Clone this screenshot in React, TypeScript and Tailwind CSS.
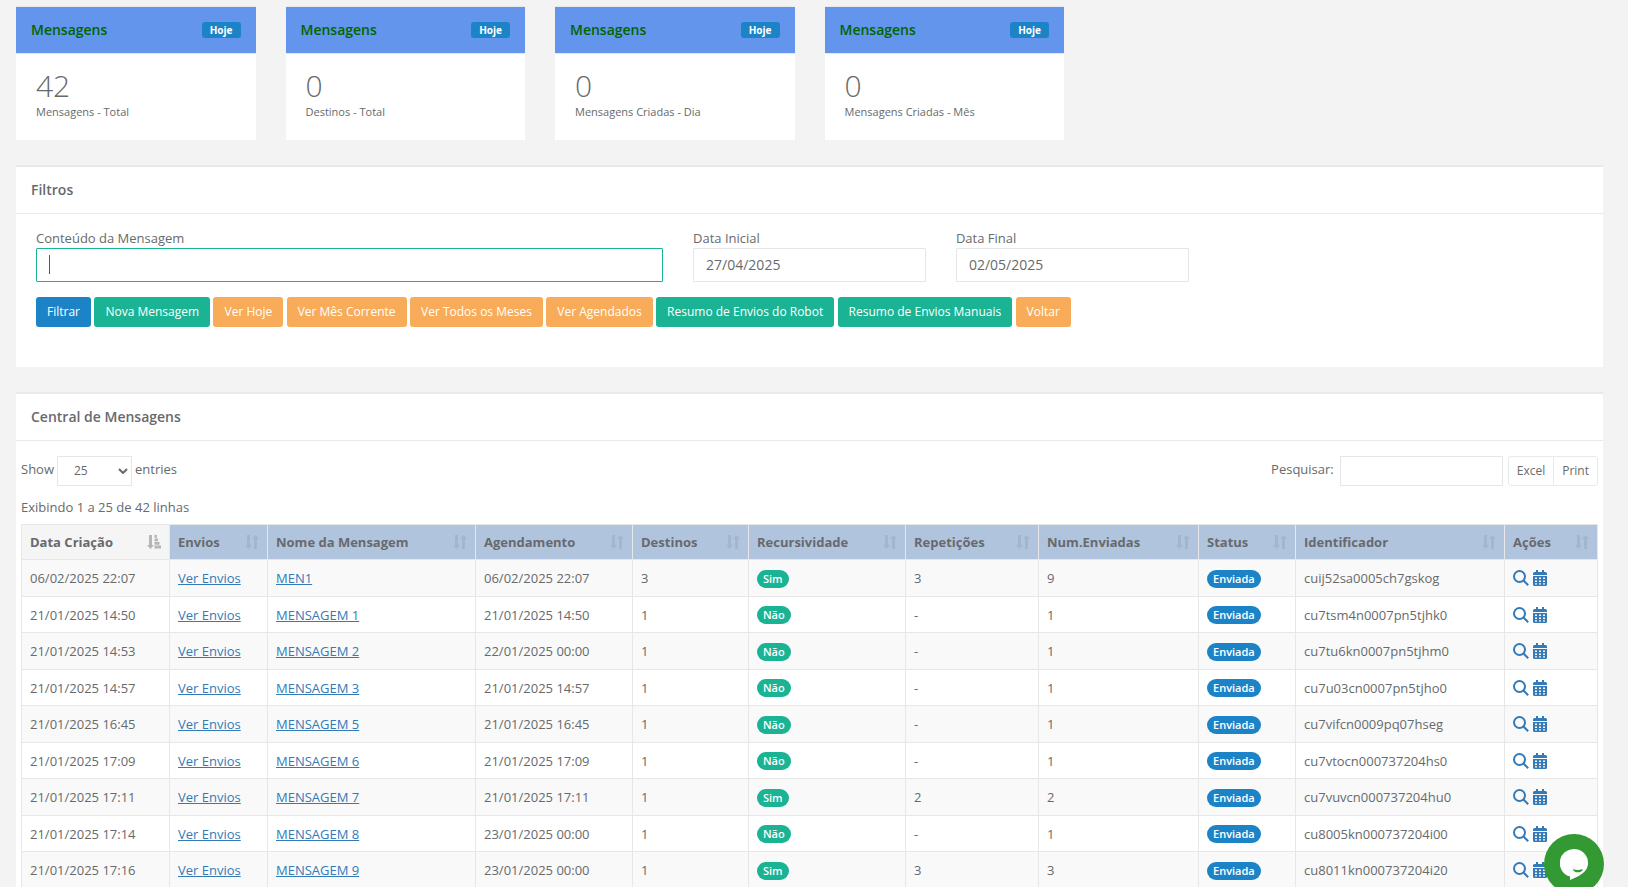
import { Fragment } from "react";
import type { ReactNode } from "react";
import { clsx } from "clsx";

type Message = {
  created: string;
  name: string;
  schedule: string;
  targets: number;
  recurring: boolean;
  repeats: string;
  sent: number;
  id: string;
};

const CARDS = [
  { value: 42, label: "Mensagens - Total" },
  { value: 0, label: "Destinos - Total" },
  { value: 0, label: "Mensagens Criadas - Dia" },
  { value: 0, label: "Mensagens Criadas - Mês" },
];

const TONES = {
  primary: "bg-[#1c84c6]",
  success: "bg-[#1ab394]",
  warning: "bg-[#f8ac59]",
};

const ACTIONS: { label: string; tone: keyof typeof TONES }[] = [
  { label: "Filtrar", tone: "primary" },
  { label: "Nova Mensagem", tone: "success" },
  { label: "Ver Hoje", tone: "warning" },
  { label: "Ver Mês Corrente", tone: "warning" },
  { label: "Ver Todos os Meses", tone: "warning" },
  { label: "Ver Agendados", tone: "warning" },
  { label: "Resumo de Envios do Robot", tone: "success" },
  { label: "Resumo de Envios Manuais", tone: "success" },
  { label: "Voltar", tone: "warning" },
];

// Column widths are proportions: the fixed table stretches them to the panel.
const COLUMNS = [
  { label: "Data Criação", width: "w-[148px]" },
  { label: "Envios", width: "w-[98px]" },
  { label: "Nome da Mensagem", width: "w-[208px]" },
  { label: "Agendamento", width: "w-[157px]" },
  { label: "Destinos", width: "w-[116px]" },
  { label: "Recursividade", width: "w-[157px]" },
  { label: "Repetições", width: "w-[133px]" },
  { label: "Num.Enviadas", width: "w-[160px]" },
  { label: "Status", width: "w-[97px]" },
  { label: "Identificador", width: "w-[209px]" },
  { label: "Ações", width: "w-[93px]" },
];

const MESSAGES: Message[] = [
  { created: "06/02/2025 22:07", name: "MEN1", schedule: "06/02/2025 22:07", targets: 3, recurring: true, repeats: "3", sent: 9, id: "cuij52sa0005ch7gskog" },
  { created: "21/01/2025 14:50", name: "MENSAGEM 1", schedule: "21/01/2025 14:50", targets: 1, recurring: false, repeats: "-", sent: 1, id: "cu7tsm4n0007pn5tjhk0" },
  { created: "21/01/2025 14:53", name: "MENSAGEM 2", schedule: "22/01/2025 00:00", targets: 1, recurring: false, repeats: "-", sent: 1, id: "cu7tu6kn0007pn5tjhm0" },
  { created: "21/01/2025 14:57", name: "MENSAGEM 3", schedule: "21/01/2025 14:57", targets: 1, recurring: false, repeats: "-", sent: 1, id: "cu7u03cn0007pn5tjho0" },
  { created: "21/01/2025 16:45", name: "MENSAGEM 5", schedule: "21/01/2025 16:45", targets: 1, recurring: false, repeats: "-", sent: 1, id: "cu7vifcn0009pq07hseg" },
  { created: "21/01/2025 17:09", name: "MENSAGEM 6", schedule: "21/01/2025 17:09", targets: 1, recurring: false, repeats: "-", sent: 1, id: "cu7vtocn000737204hs0" },
  { created: "21/01/2025 17:11", name: "MENSAGEM 7", schedule: "21/01/2025 17:11", targets: 1, recurring: true, repeats: "2", sent: 2, id: "cu7vuvcn000737204hu0" },
  { created: "21/01/2025 17:14", name: "MENSAGEM 8", schedule: "23/01/2025 00:00", targets: 1, recurring: false, repeats: "-", sent: 1, id: "cu8005kn000737204i00" },
  { created: "21/01/2025 17:16", name: "MENSAGEM 9", schedule: "23/01/2025 00:00", targets: 1, recurring: true, repeats: "3", sent: 3, id: "cu8011kn000737204i20" },
];

const fieldClass = "w-full h-[34px] border bg-white px-3 pb-[2px] text-[14px] rounded-[1px] outline-none";
const cellClass = "border border-[#e7e7e7] px-2";

function SortIcon({ active }: { active?: boolean }) {
  return (
    <svg
      viewBox="0 0 14 14"
      aria-hidden="true"
      className={clsx("size-[14px] shrink-0 fill-current", active ? "opacity-45" : "opacity-15")}
    >
      <path d="M2 0h3v10h2L3.500 14 0 10h2z" />
      {active ? (
        <path d="M7.500 0h2.500v2.800H7.500zM7.500 3.500h3.500v2.800H7.500zM7.500 7h5v2.800h-5zM7.500 10.500H14v3H7.500z" />
      ) : (
        <path d="M9 14h3V4h2l-3.500-4L7 4h2z" />
      )}
    </svg>
  );
}

function SearchIcon() {
  return (
    <svg viewBox="0 0 16 16" aria-hidden="true" className="size-4 fill-none stroke-current stroke-2">
      <circle cx="6.500" cy="6.500" r="5.500" />
      <path d="M10.500 10.500 15.200 15.200" />
    </svg>
  );
}

function CalendarIcon() {
  return (
    <svg viewBox="0 0 14 16" aria-hidden="true" className="h-4 w-[14px] fill-current">
      <path
        fillRule="evenodd"
        d="M3 0h2v2h4V0h2v2h1.500A1.500 1.500 0 0 1 14 3.500V5H0V3.500A1.500 1.500 0 0 1 1.500 2H3zM0 6h14v8.500a1.500 1.500 0 0 1-1.500 1.500h-11A1.500 1.500 0 0 1 0 14.500zM2 7.500V9h2V7.500zM6 7.500V9h2V7.500zM10 7.500V9h2V7.500zM2 10.500V12h2v-1.500zM6 10.500V12h2v-1.500zM10 10.500V12h2v-1.500zM2 13.300v1.200h2v-1.200zM6 13.300v1.200h2v-1.200zM10 13.300v1.200h2v-1.200z"
      />
    </svg>
  );
}

function Pill({ tone, children }: { tone: keyof typeof TONES; children: ReactNode }) {
  return (
    <span className={clsx("inline-block rounded-full px-[6px] text-[11px] leading-[18px] font-semibold text-white align-middle", TONES[tone])}>
      {children}
    </span>
  );
}

function Panel({ title, children }: { title: string; children: ReactNode }) {
  return (
    <section className="mb-[25px] border-t-2 border-[#e7eaec] bg-white">
      <h5 className="h-[47px] border-b border-[#e7eaec] px-[15px] text-[14px] leading-[45px] font-semibold">{title}</h5>
      {children}
    </section>
  );
}

export default function App() {
  return (
    <main className="min-h-screen bg-[#f3f3f4] pt-[6px] pr-[25px] pl-4 font-['Open_Sans',sans-serif] text-[13px] leading-[18px] text-[#676a6c]">
      <div className="mb-[25px] grid grid-cols-6 gap-[30px]">
        {CARDS.map((card) => (
          <section key={card.label} className="border-t border-[#e7eaec] bg-white">
            <div className="flex h-[47px] items-center justify-between border-b border-[#e7eaec] bg-[#6495ed] px-[15px]">
              <h5 className="text-[14px] font-semibold text-[#006400]">Mensagens</h5>
              <span className="rounded-[3px] bg-[#1c84c6] px-2 text-[10px] leading-4 font-bold text-white">Hoje</span>
            </div>
            <div className="px-5 pt-[15px] pb-5">
              <div className="text-[30px] leading-[34px] font-light">{card.value}</div>
              <small className="block text-[11px] leading-[17px]">{card.label}</small>
            </div>
          </section>
        ))}
      </div>

      <Panel title="Filtros">
        <form className="px-5 pt-[15px] pb-10" onSubmit={(e) => e.preventDefault()}>
          <div className="grid grid-cols-12 gap-[30px]">
            <label className="col-span-5">
              <span className="block leading-[19px]">Conteúdo da Mensagem</span>
              <span className="relative block">
                <input type="text" className={clsx(fieldClass, "border-[#1ab394] caret-transparent")} />
                {/* caret of the focused field */}
                <span className="absolute top-[7px] left-[13px] h-[19px] w-px bg-[#555]" />
              </span>
            </label>
            <label className="col-span-2">
              <span className="block leading-[19px]">Data Inicial</span>
              <input type="text" defaultValue="27/04/2025" className={clsx(fieldClass, "border-[#e5e6e7]")} />
            </label>
            <label className="col-span-2">
              <span className="block leading-[19px]">Data Final</span>
              <input type="text" defaultValue="02/05/2025" className={clsx(fieldClass, "border-[#e5e6e7]")} />
            </label>
          </div>
          <div className="mt-[15px]">
            {ACTIONS.map((a) => (
              <Fragment key={a.label}>
                <button
                  type="button"
                  className={clsx("h-[30px] rounded-[3px] px-[11px] align-top text-[12px] text-white", TONES[a.tone])}
                >
                  {a.label}
                </button>{" "}
              </Fragment>
            ))}
          </div>
        </form>
      </Panel>

      <Panel title="Central de Mensagens">
        <div className="px-[5px] pt-[15px]">
          <div className="flex items-start justify-between">
            <label className="flex gap-[3px] leading-[26px]">
              Show
              <span className="relative">
                <select defaultValue="25" className="h-[30px] w-[75px] appearance-none border border-[#e5e6e7] bg-white pl-4 text-[12px] outline-none">
                  <option>10</option>
                  <option>25</option>
                  <option>50</option>
                  <option>100</option>
                </select>
                <svg viewBox="0 0 10 6" aria-hidden="true" className="pointer-events-none absolute top-3 right-1 h-[6px] w-[10px] fill-none stroke-current stroke-2">
                  <path d="M1 1l4 4 4-4" />
                </svg>
              </span>
              entries
            </label>
            <div className="flex gap-[5px]">
              <label className="flex gap-[6px] leading-[26px]">
                Pesquisar:
                <input type="search" className="h-[30px] w-[163px] border border-[#e5e6e7] px-2 outline-none" />
              </label>
              <div className="flex h-[30px] text-[12px]">
                <button type="button" className="rounded-l-[3px] border border-[#e7eaec] bg-white px-2">Excel</button>
                <button type="button" className="-ml-px rounded-r-[3px] border border-[#e7eaec] bg-white px-2">Print</button>
              </div>
            </div>
          </div>
          <p className="mt-3 mb-2">Exibindo 1 a 25 de 42 linhas</p>

          <table className="w-full table-fixed border-collapse">
            <thead>
              <tr className="h-[35px]">
                {COLUMNS.map((col, i) => (
                  <th
                    key={col.label}
                    className={clsx(cellClass, col.width, "text-left font-bold", i === 0 ? "bg-[#f5f5f6]" : "bg-[#b0c4de]")}
                  >
                    <span className="flex items-center justify-between">
                      {col.label}
                      <SortIcon active={i === 0} />
                    </span>
                  </th>
                ))}
              </tr>
            </thead>
            <tbody>
              {MESSAGES.map((m) => (
                <tr key={m.id} className="h-9 odd:h-[37px] odd:bg-[#f9f9f9]">
                  <td className={cellClass}>{m.created}</td>
                  <td className={cellClass}>
                    <a href="#envios" className="text-[#337ab7] underline">Ver Envios</a>
                  </td>
                  <td className={cellClass}>
                    <a href="#mensagem" className="text-[#337ab7] underline">{m.name}</a>
                  </td>
                  <td className={cellClass}>{m.schedule}</td>
                  <td className={cellClass}>{m.targets}</td>
                  <td className={cellClass}>
                    <Pill tone="success">{m.recurring ? "Sim" : "Não"}</Pill>
                  </td>
                  <td className={cellClass}>{m.repeats}</td>
                  <td className={cellClass}>{m.sent}</td>
                  <td className={cellClass}>
                    <Pill tone="primary">Enviada</Pill>
                  </td>
                  <td className={cellClass}>{m.id}</td>
                  <td className={cellClass}>
                    <span className="flex gap-1 text-[#337ab7]">
                      <a href="#detalhes" aria-label="Detalhes"><SearchIcon /></a>
                      <a href="#agenda" aria-label="Agenda"><CalendarIcon /></a>
                    </span>
                  </td>
                </tr>
              ))}
            </tbody>
          </table>
        </div>
      </Panel>

      <button
        type="button"
        aria-label="Chat"
        className="fixed right-6 -bottom-[7px] flex size-[60px] items-center justify-center rounded-full bg-[#339933]"
      >
        <svg viewBox="0 0 28 31" aria-hidden="true" className="h-[31px] w-7">
          <path fill="#fff" d="M14 0a14 14 0 0 1 14 14c0 7-5 12-18 17v-3.500A14 14 0 0 1 14 0z" />
          <path fill="#393" d="M13.500 20.300c2.500 1 6 1 8.500 0 .6 0 .8.600.4 1.100-2 2.500-6.800 2.500-9 0-.5-.6-.4-1.200.1-1.100z" />
        </svg>
      </button>
    </main>
  );
}
